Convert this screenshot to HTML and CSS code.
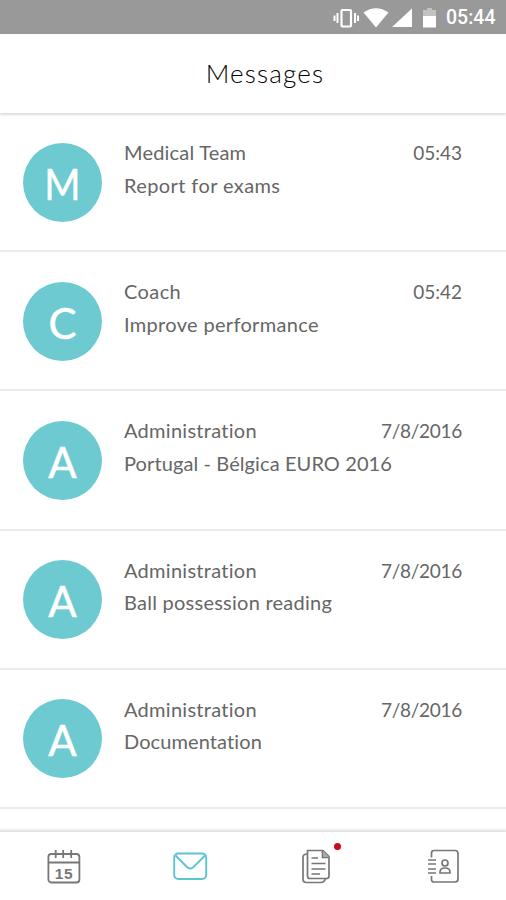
FILE: index.html
```html
<!DOCTYPE html>
<html lang="en">
<head>
<meta charset="utf-8">
<title>Messages</title>
<link rel="stylesheet" href="styles.css">
</head>
<body>
<div class="status">
  <svg class="status-icons" width="106" height="24" viewBox="0 0 106 24" fill="#fff">
    <rect x="9.500" y="4" width="9.5" height="16.500" rx="1" fill="none" stroke="#fff" stroke-width="2.2"/>
    <path d="M4.500 7h2v10h-2zM1.500 9.500h2v5.500h-2zM22 7h2v10h-2zM25 9.500h2v5.500h-2z"/>
    <path d="M31.500 6.500Q44-2 56.500 6.500L44 21.500z"/>
    <path d="M80 2.500v18.500H60z"/>
    <path d="M91 4h4V2h5v2h4v6H91z" opacity=".4"/>
    <path d="M91 10h13v11.500H91z"/>
  </svg>
  <span class="clock">05:44</span>
</div>
<header class="header"><h1>Messages</h1></header>
<main class="list">
  <article class="row"><div class="avatar"><span class="wide">M</span></div><div class="body"><div class="top"><span class="sender medical">Medical Team</span><time>05:43</time></div><p class="exams">Report for exams</p></div></article>
  <article class="row"><div class="avatar"><span>C</span></div><div class="body"><div class="top"><span class="sender coach">Coach</span><time>05:42</time></div><p class="perf">Improve performance</p></div></article>
  <article class="row"><div class="avatar"><span>A</span></div><div class="body"><div class="top"><span class="sender">Administration</span><time class="date">7/8/2016</time></div><p class="euro">Portugal - Bélgica EURO 2016</p></div></article>
  <article class="row"><div class="avatar"><span>A</span></div><div class="body"><div class="top"><span class="sender">Administration</span><time class="date">7/8/2016</time></div><p class="ball">Ball possession reading</p></div></article>
  <article class="row"><div class="avatar"><span>A</span></div><div class="body"><div class="top"><span class="sender">Administration</span><time class="date">7/8/2016</time></div><p class="docs">Documentation</p></div></article>
</main>
<nav class="nav">
  <div class="tab"><svg width="40" height="44" viewBox="-0.700 0 40 44" fill="none" stroke="#777" stroke-width="1.8">
    <rect x="4.700" y="9" width="31" height="28.500" rx="3"/><path d="M4.700 17.500h31M12 5v8M19.500 5v8M27.500 5v8"/>
    <text x="20.200" y="33.500" text-anchor="middle" class="day">15</text></svg></div>
  <div class="tab"><svg width="40" height="44" viewBox="0.500 0.500 40 44" fill="none" stroke="#5bc5d2" stroke-width="1.900">
    <rect x="4.700" y="9" width="32" height="25.500" rx="4"/><path d="M6 11L17.500 22.500Q20.700 25.500 24 22.500L35.500 11"/></svg></div>
  <div class="tab"><svg width="40" height="44" viewBox="-2 0 40 44" fill="none" stroke="#777" stroke-width="1.700">
    <path d="M9.500 5.500H25L31 11.500V31Q31 33.500 28.500 33.500H12Q9.500 33.500 9.500 31ZM24.500 6v6.500H31"/><path d="M25 6v6h6z" fill="#aaa" stroke="none"/><path d="M9.500 9Q5 9 5 12V34Q5 37.500 8 37.500H23Q26 37.500 27.500 34M13.500 13H20M13.500 18.500H27.500M13.500 24H27.500M13.500 29H22"/></svg><i class="dot"></i></div>
  <div class="tab"><svg width="40" height="44" viewBox="-1 0 40 44" fill="none" stroke="#777" stroke-width="1.700">
    <path d="M7.500 12.500V8Q7.500 5.500 10 5.500H31Q34 5.500 34 8.500V34Q34 37 31 37H10Q7.500 37 7.500 34.500V31M4 15h8M4 19h8M4 24h8M4 28h8"/><circle cx="21" cy="18" r="3"/><path d="M16 28V27Q16 23 21 23T26 27V28Z"/></svg></div>
</nav>
</body>
</html>
```

FILE: styles.css
```css
* { box-sizing: border-box; }
body { margin: 0; width: 506px; height: 900px; overflow: hidden; display: flex; flex-direction: column; background: #fff; color: #666; font-family: Lato, "Liberation Sans", sans-serif; }
.status { height: 34px; flex: none; background: #999; display: flex; align-items: center; justify-content: flex-end; gap: 8px; padding: 2px 10px 0 0; }
.status-icons { margin: -1px -1px 0 0; position: relative; left: -1px; }
.clock { width: 50px; font: 500 19.5px/34px Roboto, sans-serif; color: #fff; white-space: nowrap; }
.header { height: 79px; flex: none; display: flex; justify-content: center; padding-left: 24px; box-shadow: 0 2px 2px #dedede; background: #fff; z-index: 1; }
h1 { margin: 0; font-size: 26px; font-weight: 300; line-height: 78px; letter-spacing: 1.2px; color: #000; white-space: nowrap; }
.list { flex: 1; min-height: 0; overflow: hidden; }
.row { height: 139.2px; display: flex; padding: 29.500px 44px 0 23px; border-bottom: 2px solid #ebebeb; }
.avatar { width: 79px; height: 79px; flex: none; border-radius: 50%; background: #6ecad1; color: #fff; font-size: 42px; line-height: 83px; text-align: center; -webkit-text-stroke: .5px #fff; }
.wide { display: inline-block; transform: scaleX(.93); }
.body { flex: 1; margin: -2.500px 0 0 22px; font-size: 20px; line-height: 24px; }
.top { display: flex; justify-content: space-between; height: 32.500px; }
.sender { letter-spacing: .28px; }
.medical { letter-spacing: .2px; }
.coach { letter-spacing: .4px; }
time { font-size: 19px; line-height: 25px; letter-spacing: 0; }
.date { letter-spacing: -.3px; }
p { margin: 0; white-space: nowrap; }
.exams { letter-spacing: .4px; }
.perf { letter-spacing: .33px; }
.euro { letter-spacing: .1px; }
.ball { letter-spacing: .25px; }
.docs { letter-spacing: .1px; }
.nav { height: 68px; flex: none; display: flex; box-shadow: 0 -1px 3px 1px #dadada; background: #fff; z-index: 1; }
.tab { width: 25%; display: flex; justify-content: center; position: relative; padding-top: 13px; }
.day { font: 700 15.5px "Liberation Sans", sans-serif; fill: #777; stroke: none; letter-spacing: .5px; }
.dot { position: absolute; width: 7px; height: 7px; border-radius: 50%; background: #c90d18; left: 81px; top: 11px; }
```
